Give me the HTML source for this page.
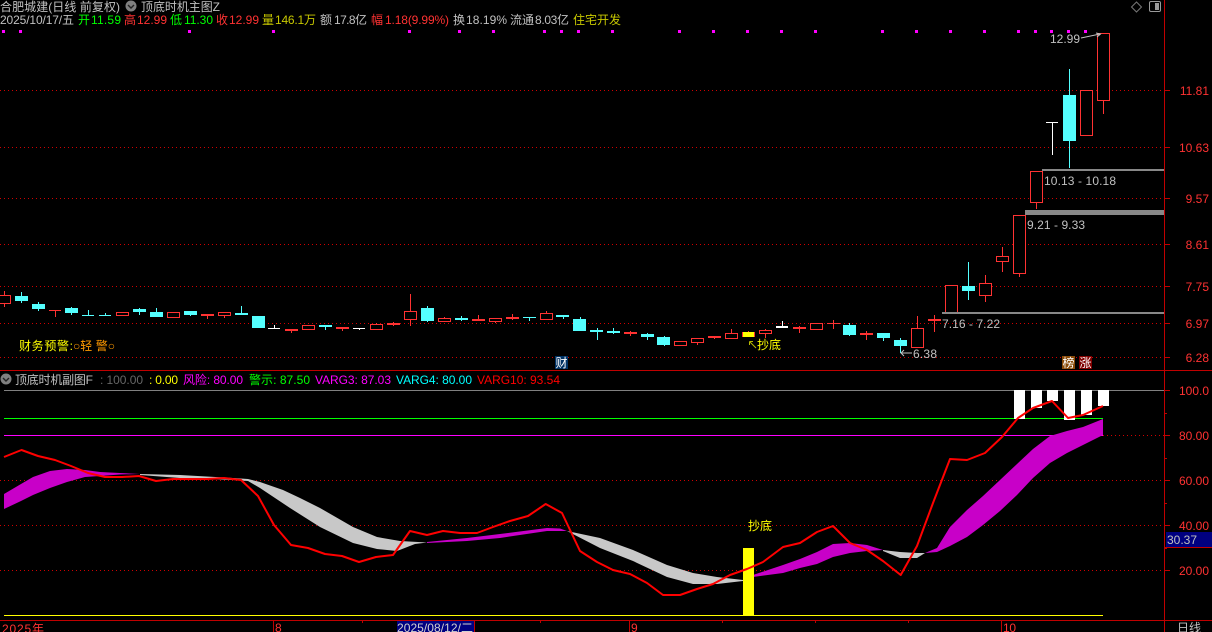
<!DOCTYPE html>
<html lang="zh"><head><meta charset="utf-8"><title>合肥城建</title>
<style>
html,body{margin:0;padding:0;background:#000;width:1212px;height:632px;overflow:hidden}
svg{display:block}
text{font-family:"Liberation Sans","WenQuanYi Zen Hei","Noto Sans CJK SC",sans-serif;font-size:12px}
.g{fill:#c0c0c0}.r{fill:#ff3232}.gr{fill:#00ff00}.y{fill:#c8c800}.m{fill:#ff00ff}.c{fill:#00ffff}.rr{fill:#ff0000}.yy{fill:#ffff00}
</style></head><body>
<svg width="1212" height="632" viewBox="0 0 1212 632" xmlns="http://www.w3.org/2000/svg">
<rect width="1212" height="632" fill="#000"/>
<g stroke="#d00000" stroke-dasharray="1 3" fill="none" shape-rendering="crispEdges">
<path d="M0 90.5H1164M0 147.5H1164M0 198.5H1164M0 244.5H1164M0 286.5H1164M0 323.5H1164M0 357.5H1164M1103 435.5H1164M0 480.5H1164M0 525.5H1164M0 570.5H1164"/>
</g>
<!-- candles -->
<g shape-rendering="crispEdges">
<path fill="none" stroke="#ff3232" d="M4.5 291V307M55.5 310V317M207.5 316V319M224.5 315V318M291.5 331V333M342.5 329V331M376.5 323V325M393.5 322V326M410.5 294V326M444.5 317V322M478.5 315V321M495.5 321V323M512.5 314V320M546.5 311V313M630.5 331V336M680.5 345V346M697.5 342V345M714.5 338V339M731.5 329V333M748.5 331V333M765.5 329V338M799.5 326V333M816.5 329V330M833.5 320V329M866.5 331V340M917.5 316V348M934.5 315V332M985.5 275V302M1002.5 247V272M1019.5 273V277M1036.5 202V209M1103.5 100V114"/>
<path fill="none" stroke="#54ffff" d="M21.5 292V303M38.5 302V311M71.5 307V315M88.5 310V315M105.5 313V316M139.5 308V315M156.5 308V317M190.5 311V316M241.5 306V315M258.5 316V328M325.5 327V330M427.5 306V322M461.5 316V321M529.5 317V321M563.5 315V319M580.5 317V331M597.5 328V340M613.5 328V334M647.5 333V340M664.5 336V346M849.5 323V336M883.5 338V341M900.5 338V353M968.5 262V300M1069.5 69V168"/>
<path fill="none" stroke="#fff" d="M274.5 325V329M359.5 328V330M782.5 321V328M1052.5 122V155"/>
<g fill="#000" stroke="#ff3232">
<rect x="-1.5" y="295.5" width="12" height="8"/><rect x="116.5" y="312.5" width="12" height="3"/><rect x="167.5" y="312.5" width="12" height="5"/><rect x="218.5" y="312.5" width="12" height="3"/><rect x="302.5" y="325.5" width="12" height="4"/><rect x="370.5" y="324.5" width="12" height="5"/><rect x="404.5" y="311.5" width="12" height="8"/><rect x="438.5" y="318.5" width="12" height="3"/><rect x="489.5" y="318.5" width="12" height="3"/><rect x="540.5" y="313.5" width="12" height="6"/><rect x="674.5" y="341.5" width="12" height="4"/><rect x="691.5" y="338.5" width="12" height="4"/><rect x="725.5" y="333.5" width="12" height="5"/><rect x="759.5" y="330.5" width="12" height="3"/><rect x="810.5" y="323.5" width="12" height="6"/><rect x="911.5" y="328.5" width="12" height="19"/><rect x="945.5" y="285.5" width="12" height="27"/><rect x="979.5" y="283.5" width="12" height="12"/><rect x="996.5" y="256.5" width="12" height="5"/><rect x="1013.5" y="215.5" width="12" height="58"/><rect x="1030.5" y="171.5" width="12" height="31"/><rect x="1080.5" y="90.5" width="12" height="45"/><rect x="1097.5" y="33.5" width="12" height="67"/>
</g>
<g fill="#ff3232">
<rect x="49" y="310" width="12" height="1"/><rect x="201" y="314" width="13" height="2"/><rect x="285" y="329" width="13" height="2"/><rect x="336" y="327" width="13" height="2"/><rect x="387" y="323" width="13" height="2"/><rect x="472" y="319" width="13" height="2"/><rect x="506" y="317" width="13" height="2"/><rect x="624" y="332" width="13" height="2"/><rect x="708" y="336" width="13" height="2"/><rect x="793" y="327" width="13" height="2"/><rect x="827" y="323" width="13" height="1"/><rect x="860" y="333" width="13" height="2"/><rect x="928" y="319" width="13" height="2"/>
<rect x="742" y="332" width="13" height="5"/>
</g>
<rect x="743" y="332" width="11" height="5" fill="#ffff00"/>
<g fill="#54ffff">
<rect x="15" y="296" width="13" height="5"/><rect x="32" y="304" width="13" height="5"/><rect x="65" y="308" width="13" height="5"/><rect x="82" y="315" width="12" height="1"/><rect x="99" y="315" width="12" height="1"/><rect x="133" y="309" width="13" height="3"/><rect x="150" y="312" width="13" height="5"/><rect x="184" y="311" width="13" height="4"/><rect x="235" y="313" width="13" height="2"/><rect x="252" y="316" width="13" height="12"/><rect x="319" y="325" width="13" height="2"/><rect x="421" y="308" width="13" height="13"/><rect x="455" y="318" width="13" height="2"/><rect x="523" y="317" width="13" height="1"/><rect x="556" y="315" width="13" height="2"/><rect x="573" y="319" width="13" height="12"/><rect x="590" y="330" width="13" height="2"/><rect x="607" y="331" width="13" height="2"/><rect x="641" y="334" width="13" height="3"/><rect x="657" y="337" width="13" height="8"/><rect x="843" y="325" width="13" height="10"/><rect x="877" y="333" width="13" height="5"/><rect x="894" y="340" width="13" height="6"/><rect x="962" y="286" width="13" height="5"/><rect x="1063" y="95" width="13" height="46"/>
</g>
<g fill="#fff">
<rect x="268" y="328" width="12" height="1"/><rect x="353" y="328" width="12" height="1"/><rect x="776" y="326" width="12" height="2"/><rect x="1046" y="122" width="12" height="1"/>
</g>
<!-- level lines -->
<g fill="#888">
<rect x="942" y="312" width="222" height="2"/><rect x="1025" y="210" width="139" height="5"/><rect x="1042" y="169" width="122" height="2"/>
</g>
<!-- magenta dots -->
<g fill="#ff00ff">
<rect x="2" y="30" width="3" height="3"/><rect x="19" y="30" width="3" height="3"/><rect x="188" y="30" width="3" height="3"/><rect x="272" y="30" width="3" height="3"/><rect x="408" y="30" width="3" height="3"/><rect x="458" y="30" width="3" height="3"/><rect x="492" y="30" width="3" height="3"/><rect x="543" y="30" width="3" height="3"/><rect x="560" y="30" width="3" height="3"/><rect x="577" y="30" width="3" height="3"/><rect x="611" y="30" width="3" height="3"/><rect x="678" y="30" width="3" height="3"/><rect x="712" y="30" width="3" height="3"/><rect x="746" y="30" width="3" height="3"/><rect x="780" y="30" width="3" height="3"/><rect x="814" y="30" width="3" height="3"/><rect x="881" y="30" width="3" height="3"/><rect x="915" y="30" width="3" height="3"/><rect x="949" y="30" width="3" height="3"/><rect x="983" y="30" width="3" height="3"/><rect x="1017" y="30" width="3" height="3"/><rect x="1034" y="30" width="3" height="3"/><rect x="1050" y="30" width="3" height="3"/><rect x="1067" y="30" width="3" height="3"/><rect x="1084" y="30" width="3" height="3"/>
</g>
</g>
<!-- lower pane lines -->
<g shape-rendering="crispEdges">
<rect x="4" y="390" width="1160" height="1" fill="#808080"/>
<rect x="4" y="418" width="1099" height="1" fill="#00ff00"/>
<rect x="4" y="435" width="1099" height="1" fill="#ff00ff"/>
<rect x="4" y="615" width="1099" height="1" fill="#ffff00"/>
</g>
<!-- band -->
<g fill="#c800c8">
<polygon points="4,494 21,484 33,477 50,471 67,469 85,470 100,472 120,473 140,474 120,474.5 100,476 85,477 67,482 50,488 33,495 21,501 4,509"/>
<polygon points="427,542 467,538 500,534 547,528 560,528.5 567,531 547,531 500,538 467,541 427,543"/>
<polygon points="743,580 753,575 783,565 800,559 817,552 833,544 850,543 867,545 883,550 867,551 850,553 833,557 817,564 800,568 783,573 753,577 743,581"/>
<polygon points="925,553 937,548 950,527 967,510 983,496 1000,480 1017,464 1033,449 1050,436 1067,431 1083,427 1103,419 1103,435 1083,445 1067,453 1050,463 1033,478 1017,495 1000,511 983,525 967,537 950,546 937,552"/>
</g>
<g fill="#c8c8c8">
<polygon points="140,474 180,475 233,478 248,479 260,482 283,490 300,498 320,508 353,527 377,537 400,541 427,542.5 415,544 397,551 377,549 353,543 320,527 290,508 260,488 248,481 233,480 210,479 180,478 140,475"/>
<polygon points="567,531 600,538 633,550 667,565 693,573 717,577 743,580 743,581 717,584 693,584 667,577 633,561 600,548"/>
<polygon points="883,550 900,552 917,553 925,553 917,558 900,558 883,551"/>
</g>
<!-- white bars + yellow -->
<g shape-rendering="crispEdges">
<g fill="#fff">
<rect x="1014" y="390" width="11" height="29"/><rect x="1031" y="390" width="11" height="18"/><rect x="1047" y="390" width="11" height="11"/><rect x="1064" y="390" width="11" height="30"/><rect x="1081" y="390" width="11" height="25"/><rect x="1098" y="390" width="11" height="16"/>
</g>
<rect x="743" y="548" width="11" height="67" fill="#ffff00"/>
</g>
<polyline fill="none" stroke="#ff0000" stroke-width="2" stroke-linejoin="round" points="4,457 21.5,450 38,456 55,460 71,466 88,473 105,477 122,477 139,476 156,481 173,479 190,479 207,479 224,478 241,480 258,496 274,525 291,545 308,548 325,554 342,556 359,562 376,557 393,555 410,531 427,535 443,531 460,533 477,533 493,527 510,521 528,516 545.7,504 562,513 580,551 597,562 613,570 630,574 647,583 663,595 680,595 697,589 713,584 730,575 747,569 763,562 783,547 800,543 817,532 833,526 850,543 867,550 883,561 900.7,575 917,546 933,503 950,459 967,460 985,453 1002,437 1018,418 1033,408 1052,401 1068,418 1083,415 1103,406"/>
<!-- frame -->
<g fill="#c00000" shape-rendering="crispEdges">
<rect x="1164" y="0" width="1" height="632"/>
<rect x="0" y="370" width="1212" height="1"/>
<rect x="0" y="620" width="1212" height="1"/>
<rect x="1164" y="90" width="6" height="1"/><rect x="1164" y="147" width="6" height="1"/><rect x="1164" y="198" width="6" height="1"/><rect x="1164" y="244" width="6" height="1"/><rect x="1164" y="286" width="6" height="1"/><rect x="1164" y="323" width="6" height="1"/><rect x="1164" y="357" width="6" height="1"/>
<rect x="1164" y="390" width="6" height="1"/><rect x="1164" y="435" width="6" height="1"/><rect x="1164" y="480" width="6" height="1"/><rect x="1164" y="525" width="6" height="1"/><rect x="1164" y="570" width="6" height="1"/>
<rect x="1164" y="413" width="3" height="1"/><rect x="1164" y="458" width="3" height="1"/><rect x="1164" y="503" width="3" height="1"/><rect x="1164" y="548" width="3" height="1"/>
<rect x="273" y="620" width="1" height="12"/><rect x="474" y="620" width="1" height="12"/><rect x="629" y="620" width="1" height="12"/><rect x="1001" y="620" width="1" height="12"/>
<rect x="362" y="620" width="1" height="3"/><rect x="540" y="620" width="1" height="3"/><rect x="722" y="620" width="1" height="3"/><rect x="815" y="620" width="1" height="3"/><rect x="908" y="620" width="1" height="3"/>
</g>
<!-- header -->
<text x="0" y="11" class="g" textLength="120">合肥城建(日线 前复权)</text>
<circle cx="131" cy="6" r="5.5" fill="#808080"/><path d="M128 5l3 3 3-3" fill="none" stroke="#222" stroke-width="1.4"/>
<text x="141" y="11" class="g" textLength="79">顶底时机主图Z</text>
<path d="M1136.5 2L1141.5 7 1136.5 12 1131.5 7Z" fill="none" stroke="#777"/>
<rect x="1149.5" y="1.5" width="11" height="10" rx="1.5" fill="none" stroke="#999"/><rect x="1155" y="3" width="4" height="7" fill="#999"/>
<text x="0" y="24" class="g" textLength="74">2025/10/17/五</text>
<text x="78" y="24" class="gr">开</text><text x="91" y="24" class="gr" textLength="30">11.59</text>
<text x="124" y="24" class="r">高</text><text x="137" y="24" class="r" textLength="30">12.99</text>
<text x="170" y="24" class="gr">低</text><text x="184" y="24" class="gr" textLength="29">11.30</text>
<text x="216" y="24" class="r">收</text><text x="229" y="24" class="r" textLength="30">12.99</text>
<text x="262" y="24" class="y">量</text><text x="275" y="24" class="y" textLength="41">146.1万</text>
<text x="320" y="24" class="g">额</text><text x="334" y="24" class="g" textLength="33">17.8亿</text>
<text x="371" y="24" class="r">幅</text><text x="385" y="24" class="r" textLength="64">1.18(9.99%)</text>
<text x="453" y="24" class="g">换</text><text x="466" y="24" class="g" textLength="41">18.19%</text>
<text x="510" y="24" class="g" textLength="24">流通</text><text x="535" y="24" class="g" textLength="34">8.03亿</text>
<text x="573" y="24" class="y" textLength="48">住宅开发</text>
<!-- right labels -->
<g>
<text x="1209" y="95" class="r" text-anchor="end">11.81</text><text x="1209" y="152" class="r" text-anchor="end">10.63</text><text x="1209" y="203" class="r" text-anchor="end">9.57</text><text x="1209" y="249" class="r" text-anchor="end">8.61</text><text x="1209" y="291" class="r" text-anchor="end">7.75</text><text x="1209" y="328" class="r" text-anchor="end">6.97</text><text x="1209" y="362" class="r" text-anchor="end">6.28</text>
<text x="1209" y="395" class="r" text-anchor="end">100.0</text><text x="1209" y="440" class="r" text-anchor="end">80.00</text><text x="1209" y="485" class="r" text-anchor="end">60.00</text><text x="1209" y="530" class="r" text-anchor="end">40.00</text><text x="1209" y="575" class="r" text-anchor="end">20.00</text>
</g>
<rect x="1166" y="532" width="46" height="15" fill="#000080" shape-rendering="crispEdges"/><rect x="1164" y="547" width="48" height="1" fill="#c00000" shape-rendering="crispEdges"/>
<text x="1167" y="544" class="g">30.37</text>
<!-- annotations -->
<text x="1050" y="43" class="g" textLength="30">12.99</text>
<path d="M1081 38L1100 34M1096 33L1100.5 34 1097 37" fill="none" stroke="#c0c0c0"/>
<text x="1044" y="185" class="g" textLength="72">10.13 - 10.18</text>
<text x="1027" y="229" class="g" textLength="58">9.21 - 9.33</text>
<text x="942" y="328" class="g" textLength="58">7.16 - 7.22</text>
<text x="913" y="358" class="g" textLength="24">6.38</text>
<path d="M912 353H901M904 350L901 353 904 356" fill="none" stroke="#c0c0c0"/>
<text x="19" y="350" class="yy" textLength="54">财务预警:</text>
<text x="73" y="350" fill="#ff9900" textLength="42">○轻 警○</text>
<path d="M750 342l6 6M749.5 341.5v3.5M749.5 341.5h3.5" fill="none" stroke="#b8b800"/>
<text x="757" y="349" class="yy" textLength="24">抄底</text>
<text x="748" y="530" class="yy" textLength="24">抄底</text>
<rect x="555" y="356" width="13" height="13" fill="#003366" shape-rendering="crispEdges"/><text x="555.5" y="367" fill="#fff">财</text>
<rect x="1062" y="356" width="13" height="13" fill="#8a4b08" shape-rendering="crispEdges"/><text x="1062.5" y="367" fill="#fff">榜</text>
<rect x="1079" y="356" width="13" height="13" fill="#800000" shape-rendering="crispEdges"/><text x="1079.5" y="367" fill="#fff">涨</text>
<!-- lower header -->
<circle cx="6" cy="379" r="5.5" fill="#808080"/><path d="M3 378l3 3 3-3" fill="none" stroke="#222" stroke-width="1.4"/>
<text x="15" y="384" class="g" textLength="78">顶底时机副图F</text>
<text x="100" y="384" fill="#666" textLength="43">: 100.00</text>
<text x="149" y="384" class="yy" textLength="29">: 0.00</text>
<text x="183" y="384" class="m" textLength="60">风险: 80.00</text>
<text x="249" y="384" class="gr" textLength="61">警示: 87.50</text>
<text x="315" y="384" class="m" textLength="76">VARG3: 87.03</text>
<text x="396" y="384" class="c" textLength="76">VARG4: 80.00</text>
<text x="477" y="384" class="rr" textLength="83">VARG10: 93.54</text>
<!-- bottom axis -->
<text x="2" y="633" class="r" textLength="42">2025年</text>
<text x="275" y="632" class="r">8</text>
<rect x="397" y="621" width="77" height="11" fill="#000080" shape-rendering="crispEdges"/>
<text x="397" y="632" fill="#d0d0d0" textLength="76">2025/08/12/二</text>
<text x="631" y="632" class="r">9</text>
<text x="1003" y="632" class="r" textLength="13">10</text>
<text x="1177" y="632" class="g" textLength="24">日线</text>
</svg>
</body></html>
